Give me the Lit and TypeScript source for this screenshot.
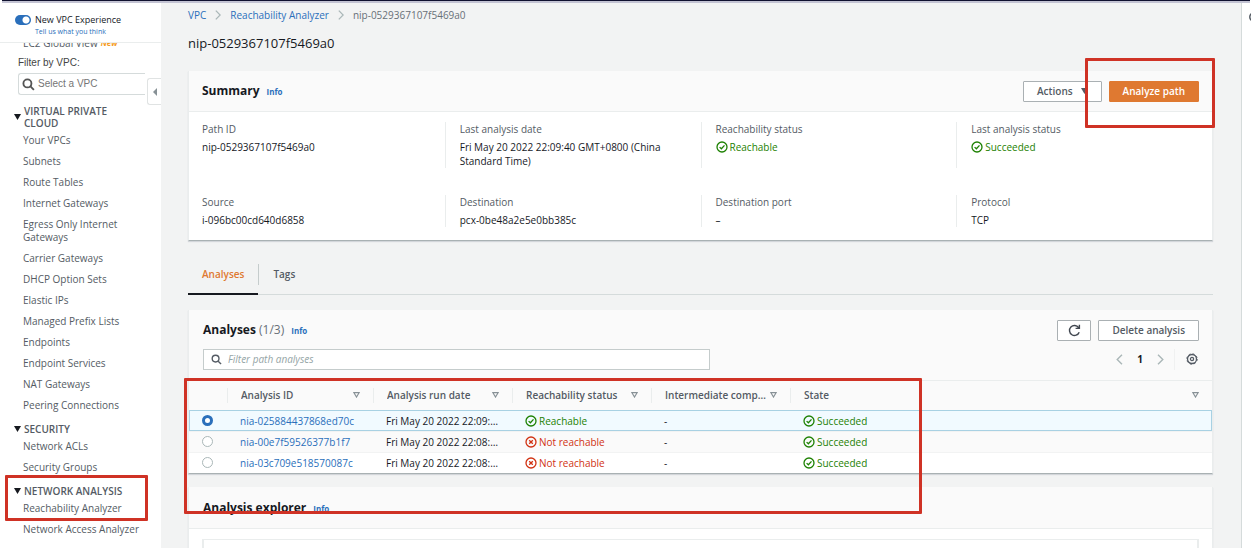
import { LitElement, html, css, svg, nothing } from "lit";
import { customElement, state } from "lit/decorators.js";

type Status = "ok" | "bad";

interface Analysis {
  id: string;
  date: string;
  reachability: Status;
}

const VPC_LINKS = [
  "Your VPCs",
  "Subnets",
  "Route Tables",
  "Internet Gateways",
  "Egress Only Internet Gateways",
  "Carrier Gateways",
  "DHCP Option Sets",
  "Elastic IPs",
  "Managed Prefix Lists",
  "Endpoints",
  "Endpoint Services",
  "NAT Gateways",
  "Peering Connections",
];

const ANALYSES: Analysis[] = [
  { id: "nia-025884437868ed70c", date: "Fri May 20 2022 22:09:40", reachability: "ok" },
  { id: "nia-00e7f59526377b1f7", date: "Fri May 20 2022 22:08:52", reachability: "bad" },
  { id: "nia-03c709e518570087c", date: "Fri May 20 2022 22:08:11", reachability: "bad" },
];

const COLUMNS = ["Analysis ID", "Analysis run date", "Reachability status", "Intermediate components", "State"];

const statusIcon = (kind: Status) => html`<svg class="status-icon" viewBox="0 0 12 12" aria-hidden="true">
  <circle cx="6" cy="6" r="5" />
  ${kind === "ok" ? svg`<path d="M3.6 6.1 5.4 7.8 8.5 4.4" />` : svg`<path d="M4.2 4.2 7.8 7.8M7.8 4.2 4.2 7.8" />`}
</svg>`;

const status = (kind: Status, text: string) =>
  html`<span class="status ${kind}">${statusIcon(kind)}<span>${text}</span></span>`;

const searchIcon = html`<svg class="search-icon" viewBox="0 0 12 12" aria-hidden="true">
  <circle cx="5" cy="5" r="3.7" />
  <path d="M7.8 7.8 11 11" />
</svg>`;

@customElement("app-root")
export class AppRoot extends LitElement {
  @state() private selected = 0;

  static styles = css`
    :host {
      display: block;
      position: relative;
      height: 100vh;
      overflow: hidden;
      background: #fff;
      color: #16191f;
      font: 10px/14px "Open Sans", "Noto Sans", sans-serif;
    }
    * { box-sizing: border-box; }
    h1, h2, h3, ul, dl, dd, p { margin: 0; padding: 0; }
    ul { list-style: none; }
    a { color: #2a6fbb; text-decoration: none; }
    button, input { font: inherit; color: inherit; margin: 0; }
    button { cursor: pointer; }
    svg { display: block; flex: none; fill: none; }

    .topbar {
      height: 3px;
      margin: 0 6px 0 2px;
      background: #c3c3d3;
      border-top: 1px solid #10112f;
    }
    .shell { display: flex; height: calc(100% - 3px); }

    .side { position: relative; flex: none; width: 161px; color: #545b64; }
    .side-head {
      display: grid;
      grid-template-columns: 16px 1fr;
      align-content: start;
      column-gap: 4px;
      height: 40px;
      padding: 10px 0 0 15px;
      border-bottom: 1px solid #eaeded;
      color: #16191f;
    }
    .side-head label { font-size: 9px; line-height: 14px; }
    .side-head a { grid-column: 2; font-size: 7px; line-height: 10px; }
    .switch {
      appearance: none;
      width: 16px;
      height: 10px;
      margin-top: 2px;
      border-radius: 5px;
      background: radial-gradient(circle at 11px 5px, #fff 3px, #2a6fbb 4px);
    }
    .clipped {
      display: flex;
      align-items: flex-end;
      gap: 3px;
      height: 5px;
      overflow: hidden;
      margin-left: 23px;
      line-height: 10px;
    }
    .clipped b { color: #f59b22; font-size: 8px; font-style: italic; }
    .filter {
      padding: 8px 0 0 18px;
      font-family: "Liberation Sans", Arial, sans-serif;
      color: #444;
    }
    .filter label { display: block; }
    .vpc-box {
      display: flex;
      align-items: center;
      gap: 3px;
      width: 127px;
      height: 22px;
      margin-top: 3px;
      padding-left: 3px;
      border: 1px solid #d5dbdb;
      border-right: 0;
      border-radius: 3px 0 0 3px;
    }
    .vpc-box .search-icon { width: 13px; height: 13px; stroke: #555; stroke-width: 1.7; }
    .vpc-box input { min-width: 0; width: 100%; border: 0; padding: 0; outline: 0; background: none; }
    .vpc-box input::placeholder { color: #757575; opacity: 1; }
    .collapse {
      position: absolute;
      top: 75px;
      right: 0;
      width: 14px;
      height: 27px;
      padding: 0;
      display: grid;
      place-items: center;
      background: #fff;
      border: 1px solid #e0e3e3;
      border-right: 0;
      border-radius: 3px 0 0 3px;
    }
    .collapse svg { width: 4px; height: 8px; fill: #879196; }

    .group { padding-left: 14px; }
    .group h3 {
      display: flex;
      align-items: center;
      gap: 3px;
      width: 125px;
      font-size: 10px;
      line-height: 12px;
      font-weight: 600;
    }
    .group h3 svg { width: 7px; height: 6px; fill: #16191f; }
    .group ul { display: grid; gap: 8px; padding: 5px 30px 0 9px; line-height: 13px; }
    .group.first { padding-top: 10px; }
    .group + .group { padding-top: 11px; }
    .group li a { color: #545b64; }
    .group.wide ul { padding-right: 0; }

    main {
      flex: 1;
      min-width: 0;
      padding: 5px 28px 0 27px;
      background: #f2f3f3;
      overflow: hidden;
    }
    .crumbs { display: flex; align-items: center; gap: 9px; color: #687078; }
    .crumbs svg { width: 6px; height: 10px; stroke: #aab7b8; stroke-width: 1.3; }
    h1 { margin-top: 12px; font-size: 13px; line-height: 18px; font-weight: 400; }

    .card {
      background: #fff;
      border: 1px solid #eaeded;
      border-width: 0 1px 1px;
      border-bottom-color: #a9b1b3;
      box-shadow: 0 1px 1px #00103020;
    }
    .card-head { display: flex; align-items: center; gap: 7px; background: #fafafa; }
    h2 { font-size: 12px; line-height: 18px; font-weight: 700; }
    h2 span { font-weight: 400; color: #687078; }
    .info { font-size: 8px; font-weight: 700; line-height: 14px; padding-top: 2px; }
    .spacer { flex: 1; }

    .btn {
      display: flex;
      align-items: center;
      justify-content: center;
      gap: 8px;
      height: 21px;
      padding: 0 13px;
      border: 1px solid #aab0b3;
      border-radius: 1px;
      background: #fff;
      color: #545b64;
      font-weight: 600;
    }
    .btn.primary { background: #df7931; border-color: #df7931; color: #fff; }
    .btn .caret { width: 7px; height: 6px; fill: #545b64; }
    .btn .reload { width: 13px; height: 13px; stroke: #414750; stroke-width: 1.4; }
    .btn.icon { width: 34px; padding: 0; }

    .summary { margin-top: 19px; }
    .summary .card-head { height: 41px; padding: 0 13px; border-bottom: 1px solid #eaeded; }
    .facts {
      display: grid;
      grid-template-columns: repeat(4, 1fr);
      row-gap: 27px;
      padding: 10px 0 13px;
    }
    .fact { padding: 0 20px 0 14px; border-left: 1px solid #eaeded; }
    .fact:nth-child(4n + 1) { padding-left: 12px; border-left-color: transparent; }
    .fact dt { color: #545b64; }
    .fact dd { margin-top: 4px; }

    .status { display: inline-flex; align-items: center; gap: 2px; vertical-align: top; }
    .status.ok { color: #1d8102; }
    .status.bad { color: #d13212; }
    .status-icon { width: 12px; height: 12px; stroke: currentColor; stroke-width: 1.3; }

    .tabs { display: flex; height: 41px; margin-top: 13px; border-bottom: 1px solid #d5dbdb; }
    .tab {
      height: 41px;
      padding: 0 14px;
      border: 0;
      border-bottom: 2px solid transparent;
      background: none;
      color: #545b64;
      font-weight: 600;
    }
    .tab.active { color: #df7931; border-bottom-color: #16191f; }
    .divider { width: 1px; height: 21px; margin-top: 10px; background: #c5cccc; }

    .analyses { margin-top: 15px; }
    .analyses .card-head { height: 39px; padding: 1px 13px 0 14px; }
    .tools {
      display: flex;
      align-items: center;
      height: 32px;
      padding: 0 14px 11px 14px;
      background: #fafafa;
      border-bottom: 1px solid #eaeded;
    }
    .search {
      display: flex;
      align-items: center;
      gap: 6px;
      width: 51%;
      height: 21px;
      padding-left: 7px;
      background: #fff;
      border: 1px solid #c5cccc;
    }
    .search .search-icon { width: 11px; height: 11px; stroke: #545b64; stroke-width: 1.5; }
    .search input { flex: 1; min-width: 0; padding: 0; border: 0; outline: 0; background: none; }
    .search input::placeholder { color: #95a5a6; font-style: italic; opacity: 1; }
    .pager { display: flex; align-items: center; gap: 14px; font-weight: 700; }
    .pager button { display: grid; padding: 0; border: 0; background: none; }
    .pager .chev { width: 7px; height: 11px; stroke: #aab7b8; stroke-width: 1.4; }
    .gear { width: 12px; height: 12px; stroke: #545b64; stroke-width: 1.3; }
    .pager .rule { width: 1px; height: 21px; background: #f0f1f1; margin: 0 -3px 0 -4px; }

    table { width: 100%; table-layout: fixed; border-collapse: collapse; }
    .c-pick { width: 38px; }
    .c-id { width: 146px; }
    .c-std { width: 139px; }
    th { height: 29px; padding: 0; background: #fafafa; color: #545b64; text-align: left; font-weight: 600; }
    .th {
      display: flex;
      align-items: center;
      gap: 2px;
      height: 15px;
      padding: 0 13px;
      border-left: 1px solid #eaeded;
    }
    .th span { flex: 1; overflow: hidden; text-overflow: ellipsis; white-space: nowrap; }
    .th svg { width: 7px; height: 6px; stroke: #879196; stroke-width: 1.2; }
    td {
      height: 21px;
      padding: 0 13px;
      overflow: hidden;
      text-overflow: ellipsis;
      white-space: nowrap;
    }
    tbody tr { border-top: 1px solid #f2f3f3; }
    tbody tr:nth-child(even) { background: #fafafa; }
    tbody tr.on { background: #f1faff; outline: 1px solid #a8d1e3; outline-offset: -1px; }
    .pick {
      appearance: none;
      display: block;
      width: 11px;
      height: 11px;
      border: 1px solid #aab7b8;
      border-radius: 50%;
      background: #fff;
    }
    .pick:checked { border: 3px solid #2a6fbb; }

    .explorer { margin-top: 13px; }
    .explorer .card-head { height: 42px; padding: 0 14px; border-bottom: 1px solid #eaeded; }
    .canvas { height: 60px; margin: 10px 13px 0; border: 1px solid #eaeded; border-width: 1px 2px; }

    .help { flex: none; width: 15px; border-left: 1px solid #d5dbdb; overflow: hidden; padding: 9px 0 0 7px; }
    .help button { display: block; width: 2px; height: 10px; padding: 0; border: 0; background: none; overflow: hidden; }
    .help svg { width: 10px; height: 10px; stroke: #545b64; stroke-width: 1.5; }

    .mark { position: absolute; border: 3px solid #cf3225; border-radius: 1px; pointer-events: none; }
    .mark.action { top: 58px; right: 41px; width: 130px; height: 70px; }
    .mark.results { top: 378px; left: 184px; width: 738px; height: 136px; }
    .mark.menu { top: 475px; left: 5px; width: 143px; height: 46px; }
  `;

  private group(title: string, links: string[], cls: string) {
    return html`<section class="group ${cls}">
      <h3>
        <svg viewBox="0 0 7 6" aria-hidden="true"><path d="M0 0H7L3.5 6Z" /></svg>
        <span>${title}</span>
      </h3>
      <ul>
        ${links.map((l) => html`<li><a href="#">${l}</a></li>`)}
      </ul>
    </section>`;
  }

  private fact(label: string, value: unknown) {
    return html`<div class="fact"><dt>${label}</dt><dd>${value}</dd></div>`;
  }

  render() {
    const crumb = html`<svg viewBox="0 0 6 10" aria-hidden="true"><path d="M.8.6 5.2 5 .8 9.4" /></svg>`;
    return html`
      <div class="topbar"></div>
      <div class="shell">
        <aside class="side">
          <div class="side-head">
            <input class="switch" id="new-ui" type="checkbox" role="switch" checked />
            <label for="new-ui">New VPC Experience</label>
            <a href="#">Tell us what you think</a>
          </div>
          <div class="clipped"><span>EC2 Global View</span><b>New</b></div>
          <div class="filter">
            <label for="vpc">Filter by VPC:</label>
            <div class="vpc-box">${searchIcon}<input id="vpc" type="text" placeholder="Select a VPC" /></div>
          </div>
          <button class="collapse" aria-label="Collapse navigation">
            <svg viewBox="0 0 4 8"><path d="M4 0V8L0 4Z" /></svg>
          </button>
          <nav>
            ${this.group("VIRTUAL PRIVATE CLOUD", VPC_LINKS, "first")}
            ${this.group("SECURITY", ["Network ACLs", "Security Groups"], "")}
            ${this.group("NETWORK ANALYSIS", ["Reachability Analyzer", "Network Access Analyzer"], "wide")}
          </nav>
        </aside>

        <main>
          <nav class="crumbs" aria-label="Breadcrumb">
            <a href="#">VPC</a>${crumb}<a href="#">Reachability Analyzer</a>${crumb}<span>nip-0529367107f5469a0</span>
          </nav>
          <h1>nip-0529367107f5469a0</h1>

          <section class="card summary">
            <div class="card-head">
              <h2>Summary</h2>
              <a class="info" href="#">Info</a>
              <span class="spacer"></span>
              <button class="btn" aria-haspopup="menu">
                Actions <svg class="caret" viewBox="0 0 7 6"><path d="M0 0H7L3.5 6Z" /></svg>
              </button>
              <button class="btn primary">Analyze path</button>
            </div>
            <dl class="facts">
              ${this.fact("Path ID", "nip-0529367107f5469a0")}
              ${this.fact("Last analysis date", "Fri May 20 2022 22:09:40 GMT+0800 (China Standard Time)")}
              ${this.fact("Reachability status", status("ok", "Reachable"))}
              ${this.fact("Last analysis status", status("ok", "Succeeded"))}
              ${this.fact("Source", "i-096bc00cd640d6858")}
              ${this.fact("Destination", "pcx-0be48a2e5e0bb385c")}
              ${this.fact("Destination port", "–")}
              ${this.fact("Protocol", "TCP")}
            </dl>
          </section>

          <div class="tabs" role="tablist">
            <button class="tab active" role="tab" aria-selected="true">Analyses</button>
            <span class="divider"></span>
            <button class="tab" role="tab" aria-selected="false">Tags</button>
          </div>

          <section class="card analyses">
            <div class="card-head">
              <h2>Analyses <span>(1/3)</span></h2>
              <a class="info" href="#">Info</a>
              <span class="spacer"></span>
              <button class="btn icon" aria-label="Refresh">
                <svg class="reload" viewBox="0 0 13 13">
                  <path d="M11.2 8.2A5 5 0 1 1 10.6 3.6M11.4.8V4.4H7.6" />
                </svg>
              </button>
              <button class="btn">Delete analysis</button>
            </div>
            <div class="tools">
              <div class="search">
                ${searchIcon}<input type="text" aria-label="Filter path analyses" placeholder="Filter path analyses" />
              </div>
              <span class="spacer"></span>
              <div class="pager">
                <button aria-label="Previous page">
                  <svg class="chev" viewBox="0 0 7 11"><path d="M6 .7 1.2 5.5 6 10.3" /></svg>
                </button>
                <span>1</span>
                <button aria-label="Next page">
                  <svg class="chev" viewBox="0 0 7 11"><path d="M1 .7 5.8 5.5 1 10.3" /></svg>
                </button>
                <span class="rule"></span>
                <button aria-label="Preferences">
                  <svg class="gear" viewBox="0 0 12 12">
                    <circle cx="6" cy="6" r="4.5" />
                    <circle cx="6" cy="6" r="5.2" stroke-dasharray="2 2.08" stroke-width="1" />
                    <circle cx="6" cy="6" r="1.6" />
                  </svg>
                </button>
              </div>
            </div>
            <table>
              <colgroup>
                <col class="c-pick" /><col class="c-id" /><col class="c-std" /><col class="c-std" /><col class="c-std" /><col />
              </colgroup>
              <thead>
                <tr>
                  <th></th>
                  ${COLUMNS.map(
                    (c) => html`<th scope="col">
                      <div class="th">
                        <span>${c}</span>
                        <svg viewBox="0 0 7 6" aria-hidden="true"><path d="M.9.7H6.1L3.5 5Z" /></svg>
                      </div>
                    </th>`
                  )}
                </tr>
              </thead>
              <tbody>
                ${ANALYSES.map(
                  (a, i) => html`<tr class=${i === this.selected ? "on" : nothing}>
                    <td>
                      <input class="pick" type="radio" name="analysis" aria-label=${a.id}
                        .checked=${i === this.selected} @change=${() => (this.selected = i)} />
                    </td>
                    <td><a href="#">${a.id}</a></td>
                    <td>${a.date}</td>
                    <td>${status(a.reachability, a.reachability === "ok" ? "Reachable" : "Not reachable")}</td>
                    <td>-</td>
                    <td>${status("ok", "Succeeded")}</td>
                  </tr>`
                )}
              </tbody>
            </table>
          </section>

          <section class="card explorer">
            <div class="card-head"><h2>Analysis explorer</h2><a class="info" href="#">Info</a></div>
            <div class="canvas"></div>
          </section>
        </main>

        <aside class="help">
          <button aria-label="Open help panel">
            <svg viewBox="0 0 10 10"><circle cx="5" cy="5" r="4.2" /></svg>
          </button>
        </aside>
      </div>
      <div class="mark action"></div>
      <div class="mark results"></div>
      <div class="mark menu"></div>
    `;
  }
}
